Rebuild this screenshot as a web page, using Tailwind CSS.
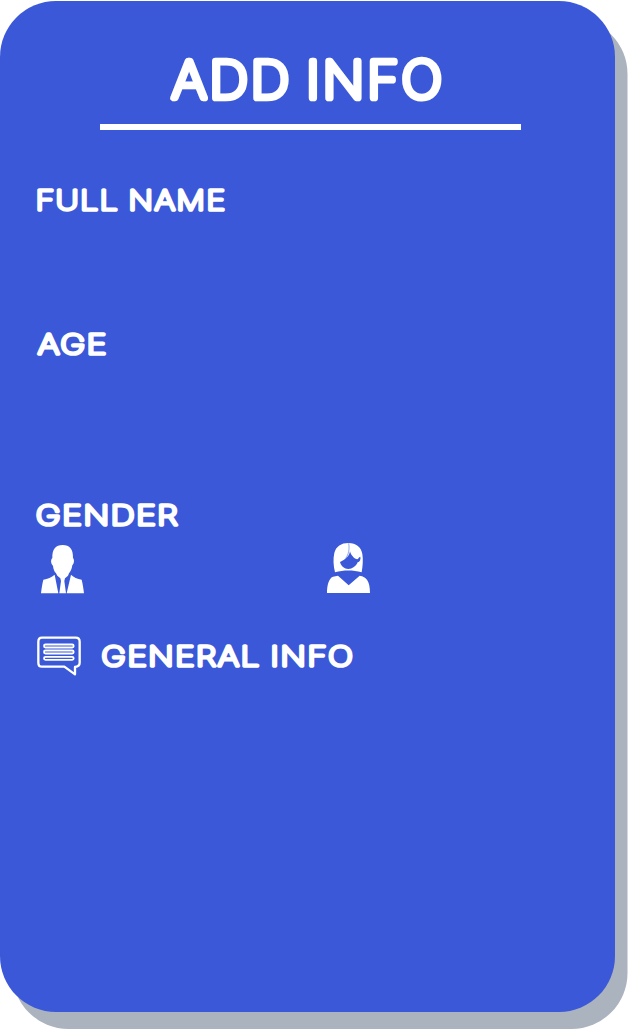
<!DOCTYPE html>
<html lang="en">
<head>
<meta charset="utf-8">
<title>Add Info</title>
<script src="https://cdn.jsdelivr.net/npm/@tailwindcss/browser@4"></script>
</head>
<body class="bg-white w-[628px] h-[1030px] overflow-hidden pt-px font-['Inter','Liberation_Sans',sans-serif] font-thin">
<main class="w-[615px] h-[1011px] rounded-[56px] bg-[#3a58d7] shadow-[12.5px_17px_0_#abb3bf] flex flex-col text-white">
  <h1 class="h-[123px] shrink-0 font-thin">
    <svg class="block w-[615px] h-[123px] fill-current stroke-current tracking-[3px] [word-spacing:-4px]" stroke-width="6.7" stroke-linejoin="round">
      <text x="172" y="97.3" font-size="51" textLength="273" lengthAdjust="spacingAndGlyphs">ADD INFO</text>
    </svg>
  </h1>
  <div class="ml-[100px] w-[421px] h-[6px] shrink-0 bg-white"></div>
  <h2 class="mt-[50px] h-10 shrink-0 font-thin">
    <svg class="block w-[300px] h-10 fill-current stroke-current tracking-[1.5px] [word-spacing:-1px]" stroke-width="3.7" stroke-linejoin="round">
      <text x="35.700" y="30" font-size="27.5" textLength="191" lengthAdjust="spacingAndGlyphs">FULL NAME</text>
    </svg>
  </h2>
  <h2 class="mt-[104px] h-10 shrink-0 font-thin">
    <svg class="block w-[300px] h-10 fill-current stroke-current tracking-[1.5px]" stroke-width="3.7" stroke-linejoin="round">
      <text x="38" y="30" font-size="27.5" textLength="70" lengthAdjust="spacingAndGlyphs">AGE</text>
    </svg>
  </h2>
  <h2 class="mt-[131px] h-10 shrink-0 font-thin">
    <svg class="block w-[300px] h-10 fill-current stroke-current tracking-[1.5px]" stroke-width="3.7" stroke-linejoin="round">
      <text x="36" y="30" font-size="27.5" textLength="143.5" lengthAdjust="spacingAndGlyphs">GENDER</text>
    </svg>
  </h2>
  <div class="pl-[30px] flex gap-[223px] shrink-0">
    <svg class="block w-[65px] h-[65px] fill-current" viewBox="0 0 195 195">
      <path d="M67 69C66 43 77 30 98 30S130 43 129 69C134 75 132 86 127 91C125 103 122 109 117 115L114 122L105 130L103 138L108 175H88L93 138L91 130L82 122L78 115C72 108 70 101 69 92C63 87 61 75 67 69Z"/>
      <path d="M74 119L85 175H33C35 159 37 146 40 134C53 131 65 127 74 119ZM123 119L110 175H162C160 159 158 146 155 134C142 131 131 127 123 119Z"/>
    </svg>
    <svg class="block w-[65px] h-[65px]" viewBox="0 0 195 195">
      <path fill="currentColor" d="M51 112C46 91 45 72 49 54C54 34 70 24 91 24C115 24 129 36 133 57C136 75 134 93 131 112C104 105 78 105 51 112Z"/>
      <path fill="#3a58d7" d="M96 49C98 58 107 71 117 73C122 73 122 65 127 65C129 74 125 80 119 82C114 94 103 102 91 102C79 102 69 93 66 81C82 74 94 64 96 49Z"/>
      <path fill="none" stroke="#3a58d7" stroke-width="1.6" d="M92 25C95 42 92 58 83 70"/>
      <path fill="currentColor" d="M27 174C27 151 32 130 45 125L60 122L92 151L125 122C145 125 156 137 156 174Z"/>
    </svg>
  </div>
  <div class="mt-[30px] pl-[30px] flex shrink-0">
    <svg class="block w-[60px] h-[55px] fill-none stroke-current" viewBox="0 0 180 165" stroke-width="7" stroke-linejoin="round">
      <path d="M36 23H137Q149 23 149 35V98Q149 109 135 111V133L103 110H36Q25 110 25 98V35Q25 23 36 23Z"/>
      <g stroke-width="5.5"><rect x="42" y="43.500" width="89" height="9" rx="4.500"/><rect x="42" y="61.500" width="89" height="9" rx="4.500"/><rect x="42" y="80.500" width="89" height="9" rx="4.500"/></g>
    </svg>
    <h2 class="font-thin">
      <svg class="block w-[300px] h-[55px] fill-current stroke-current tracking-[1.5px] [word-spacing:-1px]" stroke-width="3.7" stroke-linejoin="round">
        <text x="11.500" y="36" font-size="27.5" textLength="253" lengthAdjust="spacingAndGlyphs">GENERAL INFO</text>
      </svg>
    </h2>
  </div>
</main>
</body>
</html>
